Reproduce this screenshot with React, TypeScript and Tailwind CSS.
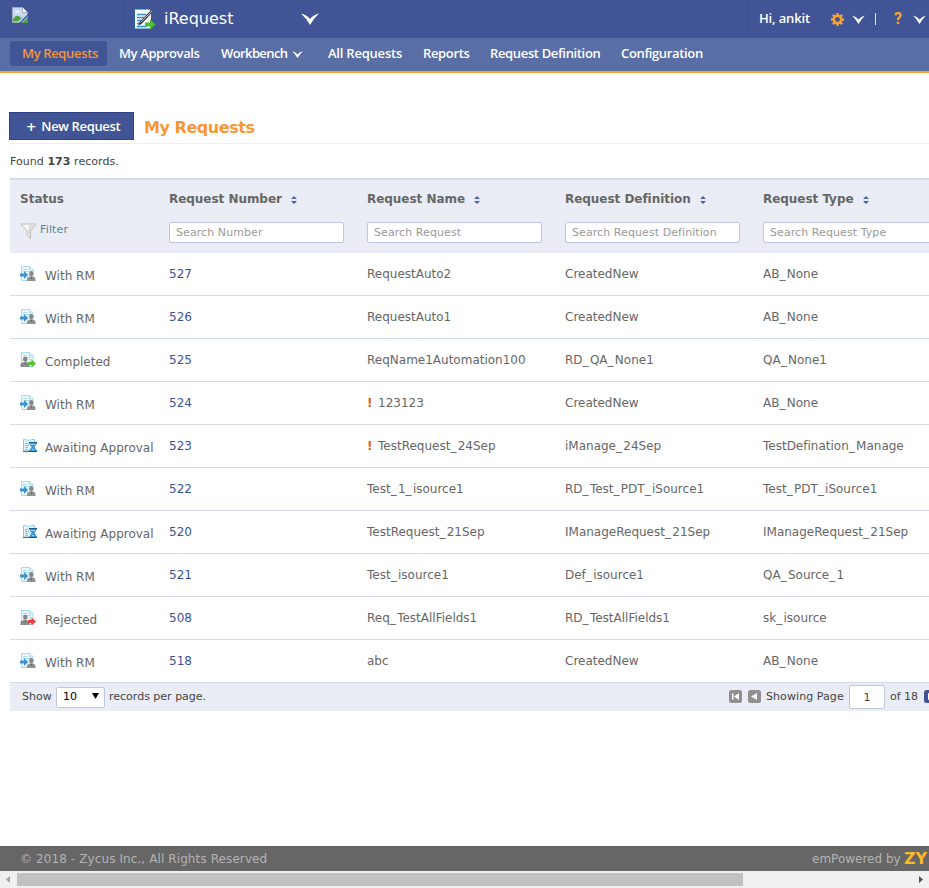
import React from 'react';

type Kind = 'rm' | 'done' | 'wait' | 'rejected';
type Row = [Kind, string, string, string, string, boolean?];

const labels: Record<Kind, string> = {
  rm: 'With RM',
  done: 'Completed',
  wait: 'Awaiting Approval',
  rejected: 'Rejected',
};

const rows: Row[] = [
  ['rm', '527', 'RequestAuto2', 'CreatedNew', 'AB_None'],
  ['rm', '526', 'RequestAuto1', 'CreatedNew', 'AB_None'],
  ['done', '525', 'ReqName1Automation100', 'RD_QA_None1', 'QA_None1'],
  ['rm', '524', '123123', 'CreatedNew', 'AB_None', true],
  ['wait', '523', 'TestRequest_24Sep', 'iManage_24Sep', 'TestDefination_Manage', true],
  ['rm', '522', 'Test_1_isource1', 'RD_Test_PDT_iSource1', 'Test_PDT_iSource1'],
  ['wait', '520', 'TestRequest_21Sep', 'IManageRequest_21Sep', 'IManageRequest_21Sep'],
  ['rm', '521', 'Test_isource1', 'Def_isource1', 'QA_Source_1'],
  ['rejected', '508', 'Req_TestAllFields1', 'RD_TestAllFields1', 'sk_isource'],
  ['rm', '518', 'abc', 'CreatedNew', 'AB_None'],
];

const columns = [
  { title: 'Request Number', hint: 'Search Number' },
  { title: 'Request Name', hint: 'Search Request' },
  { title: 'Request Definition', hint: 'Search Request Definition' },
  { title: 'Request Type', hint: 'Search Request Type' },
];

function Chevron({ className }: { className: string }) {
  return (
    <svg viewBox="0 0 18 12" preserveAspectRatio="none" className={className}>
      <path d="M0 .500Q5.500 1.500 9 6 12.500 1.500 18 .500 13 5 9 12 5 5 0 .500Z" fill="#fff" />
    </svg>
  );
}

/** Breaks a name at its underscores, which are set slightly wider than the font has them. */
function Name({ text }: { text: string }) {
  return (
    <>
      {text.split(/(_)/).map((part, i) =>
        part === '_' ? <span key={i} className="tracking-[1.3px]">_</span> : part,
      )}
    </>
  );
}

function StatusIcon({ kind }: { kind: Kind }) {
  if (kind === 'wait') {
    return (
      <svg width="16" height="16" viewBox="0 0 16 16" className="ml-0.5 block">
        <path d="M1.500 1.500h2l1 1 1-1 1 1 1-1 1 1 1-1h3V13H1.500z" fill="#e3f4fb" stroke="#8ccbe6" />
        <path d="M3 5.500h3M3 7.500h4M3 9.500h3M3 11.500h3" stroke="#8dbdd3" />
        <path d="M7 4h8v2h-1c0 1.500-1 2.500-2 3 1 .500 2 1.500 2 3h1v2H7v-2h1c0-1.500 1-2.500 2-3-1-.500-2-1.500-2-3H7z" fill="#3d98d4" />
        <path d="M7 4.500h8M7 13.500h8" stroke="#1b5c91" />
        <path d="M9 6.500h4M10 11.500h2" stroke="#9bd5f4" />
        <path d="M1 13.500h6" stroke="#287aa5" />
      </svg>
    );
  }
  const rm = kind === 'rm';
  return (
    <svg width="16" height="16" viewBox="0 0 16 16" className="block">
      <path d="M1.500.500h8.500l3 3V14.500H1.500z" fill="#eaf8fd" stroke="#a5dced" />
      <path d="M9.500.500v3.500H13M3 3.500h4M3 5.500h8M9 7.500h3M9 9.500h3" stroke="#a9dced" fill="none" />
      {rm ? (
        <>
          <ellipse cx="11.300" cy="7.500" rx="2.200" ry="2.600" fill="#858585" />
          <path d="M7 15v-2q0-1.800 2.500-2.500h3.500q2.500.700 2.500 2.500v2z" fill="#909090" />
          <path d="M10.800 10.500h1l-.3 2.500h-.4z" fill="#555" />
          <path d="M0 7.500h4V5l4.200 4L4 13v-2.500H0z" fill="#3f93cf" />
        </>
      ) : (
        <>
          <ellipse cx="5.300" cy="7.200" rx="2.200" ry="2.600" fill="#858585" />
          <path d="M.500 15v-2.500Q.500 11 3 10.200h4q2.500.800 2.500 2.300V15z" fill="#8a8a8a" />
          <path d="M4.800 10.200h1l-.3 2.500h-.4z" fill="#555" />
          <path d="M8 10h3.500V7.500L16 11.500l-4.500 4V13H8z" fill={kind === 'done' ? '#55c42e' : '#ee3f3f'} />
        </>
      )}
    </svg>
  );
}

function Sorter() {
  return (
    <svg width="6" height="8" viewBox="0 0 6 8" className="ml-[9px] mt-px shrink-0">
      <path d="M0 3 3 0l3 3zM0 5h6L3 8z" fill="#4c62a3" />
    </svg>
  );
}

function Header() {
  return (
    <header className="font-['Open_Sans',sans-serif] text-white">
      <div className="flex h-[38px] items-center bg-[#405496]">
        <svg width="16" height="16" viewBox="0 0 16 16" className="mb-2 ml-3 shrink-0">
          <path d="M.500.500h10l5 5v10H.500z" fill="#c6d8f6" stroke="#a5a9b2" />
          <path d="M1 14.500V12q4-6 8-1l2-1-5 4.500z" fill="#4ba546" />
          <path d="M3 5.500q0-2 2-1.500 2-1 2.500 1.500z" fill="#fff" />
          <path d="M10.500.500v5h5" fill="#fff" stroke="#aaa" />
          <path d="M7 16 16 7v2l-7 7z" fill="#405496" />
          <path d="m10 16 6-6v6z" fill="#4ba546" />
        </svg>
        <div className="ml-24 h-[34px] w-px bg-[#394b88]" />
        <svg width="22" height="22" viewBox="0 0 22 22" className="ml-[9px] shrink-0">
          <path d="M.500 1h15l2 2v18H.500z" fill="#f5fbff" stroke="#285f9c" />
          <path d="M3 6.500h9M3 9.500h7M3 12.500h6M3 15.500h5M3 18.500h10" stroke="#3e8dd0" strokeWidth="1.500" />
          <path d="m4 18 1.500-4L17 2l2.500 1L8.500 15z" fill="#444" />
          <path d="m7 14 11-11" stroke="#bbb" />
          <path d="M11 14.500h5v-3l5.500 5-5.500 5v-3h-5z" fill="#4ebd31" />
        </svg>
        <span className="ml-2 w-[137px] font-['DejaVu_Sans',sans-serif] text-base leading-5">iRequest</span>
        <Chevron className="h-3 w-[18px]" />
        <div className="ml-[429px] h-[34px] w-px bg-[#394b88]" />
        <span className="ml-2.5 w-[72px] whitespace-nowrap text-[13px] font-semibold tracking-[-0.15px]">Hi, ankit</span>
        <svg width="13" height="13" viewBox="-7 -7 14 14" className="shrink-0">
          <circle r="3.900" fill="none" stroke="#fca22e" strokeWidth="2.500" />
          <path d="M0-7v3M0 4v3M-7 0h3M4 0h3M-5-5l2 2M3 3l2 2M5-5 3-3M-3 3l-2 2" stroke="#fca22e" strokeWidth="2.600" />
        </svg>
        <Chevron className="ml-2 h-[9px] w-[13px] shrink-0" />
        <div className="ml-2.5 h-3 w-px shrink-0 bg-[#e4e7f1]" />
        <span className="ml-[18px] w-[19px] shrink-0 font-['Roboto',sans-serif] text-base font-bold text-[#fca22e]">?</span>
        <Chevron className="h-[9px] w-[13px] shrink-0" />
      </div>
      <nav className="flex h-[35px] items-start whitespace-nowrap border-b-2 border-[#fda62f] bg-[#5a6ea6] pt-[3px] text-[13px] font-semibold leading-[25px] tracking-[-0.35px]">
        <span className="ml-2.5 w-[97px] rounded-[3px] bg-[#405496] pl-3 text-[#f79433]">My Requests</span>
        <span className="w-[102px] pl-3 tracking-[-0.38px]">My Approvals</span>
        <span className="flex w-[107px] items-center pl-3 tracking-[-0.6px]">Workbench<Chevron className="ml-[5px] mt-0.5 h-[7px] w-[11px]" /></span>
        <span className="w-[95px] pl-3 tracking-[-0.22px]">All Requests</span>
        <span className="w-[67px] pl-3">Reports</span>
        <span className="w-[131px] pl-3">Request Definition</span>
        <span className="pl-3">Configuration</span>
      </nav>
    </header>
  );
}

function Pager() {
  return (
    <div className="flex h-7 w-[980px] items-center bg-[#eaedf5] pl-3 text-[11px] text-[#444]">
      <span className="w-[34px] pt-px">Show</span>
      <span className="flex h-[21px] w-[49px] items-center justify-between rounded-[2px] border border-[#c0c6df] bg-white pl-1.5 pr-[5px] pt-px text-black">
        10
        <svg width="7" height="6" viewBox="0 0 7 6" className="mb-1"><path d="M0 0h7L3.500 6z" fill="#000" /></svg>
      </span>
      <span className="ml-1 w-[620px] pt-px">records per page.</span>
      <svg width="13" height="13" viewBox="0 0 13 13" className="mb-0.5 shrink-0">
        <rect width="13" height="13" rx="2.500" fill="#909090" />
        <path d="M3 3.500h1.500v6H3zM10 3v7L5 6.500z" fill="#fff" />
      </svg>
      <svg width="13" height="13" viewBox="0 0 13 13" className="mb-0.5 ml-1.5 shrink-0">
        <rect width="13" height="13" rx="2.500" fill="#909090" />
        <path d="M9 3v7L3 6.500z" fill="#fff" />
      </svg>
      <span className="ml-[5px] w-[83px] whitespace-nowrap tracking-[0.08px]">Showing Page</span>
      <span className="flex h-6 w-9 items-center justify-center rounded-[2px] border border-[#c0c6df] bg-white pt-0.5">1</span>
      <span className="ml-[5px] w-[34px] whitespace-nowrap">of 18</span>
      <svg width="13" height="13" viewBox="0 0 13 13" className="mb-0.5 shrink-0">
        <rect width="13" height="13" rx="2.500" fill="#405496" />
        <path d="M4 3v7l6-3.500z" fill="#fff" />
      </svg>
    </div>
  );
}

export default function App() {
  return (
    <div className="flex h-[888px] w-[929px] flex-col overflow-hidden bg-white font-['DejaVu_Sans',sans-serif] [font-variant-ligatures:none]">
      <Header />
      <main className="h-[773px] pl-2.5 pt-10">
        <div className="flex h-[31px] items-start border-b border-[#eee]">
          <button className="-ml-px -mt-px h-7 w-[125px] shrink-0 whitespace-nowrap border border-dotted border-[#e4e7f0] bg-[#405496] pl-[3px] pt-0.5 font-['Open_Sans',sans-serif] text-[13px] font-semibold tracking-[-0.35px] text-white outline-dotted outline-1 -outline-offset-1 outline-[#333]">
            <span className="mr-[5px] font-['DejaVu_Sans',sans-serif]">+</span>New Request
          </button>
          <h1 className="ml-2.5 mt-[3px] text-base font-bold leading-6 tracking-[-0.45px] text-[#f89833]">My Requests</h1>
        </div>
        <p className="h-[34px] pt-[9px] text-[11px] leading-[18px] tracking-[0.05px] text-[#444]">Found <b>173</b> records.</p>
        <section className="w-[980px]">
          <div className="flex h-[75px] border-t-2 border-[#d5daea] bg-[#eaedf5] text-xs text-[#666]">
            <div className="w-[149px] shrink-0 pl-2.5 pt-[9px]">
              <div className="h-5 font-bold leading-5">Status</div>
              <div className="mt-[11px] flex h-5 items-center text-[11px] tracking-[0.15px] text-[#5d8295]">
                <svg width="18" height="17" viewBox="0 0 18 17" className="mr-0.5 mt-0.5">
                  <path d="M1 1h15l-5.500 7v7.500L7 12.500V8z" fill="#f7f7f5" stroke="#bbb" />
                  <path d="m10 8 4-5V2H9l-1 6v4l2 2z" fill="#ddd" />
                </svg>
                Filter
              </div>
            </div>
            {columns.map((c) => (
              <div key={c.title} className="w-[198px] shrink-0 pl-2.5 pt-[9px]">
                <div className="flex h-5 items-center whitespace-nowrap font-bold tracking-[-0.04px]">{c.title}<Sorter /></div>
                <div className="mt-[13px] flex h-[21px] w-[175px] items-center whitespace-nowrap rounded-[2px] border border-[#c0c6df] bg-white pl-1.5 pt-px text-[11px] tracking-[0.08px] text-[#999]">{c.hint}</div>
              </div>
            ))}
          </div>
          {rows.map(([kind, id, name, definition, type, urgent]) => (
            <div key={id} className="flex h-[43px] items-center border-b border-[#d5daea] text-xs text-[#666]">
              <div className="flex w-[149px] shrink-0 items-center whitespace-nowrap pl-2.5">
                <div className="w-[25px] shrink-0"><StatusIcon kind={kind} /></div>
                <span className="mt-[3px]">{labels[kind]}</span>
              </div>
              <span className="w-[198px] pl-2.5 text-[#3c5298]">{id}</span>
              <span className="w-[198px] whitespace-nowrap pl-2.5">
                {urgent && <b className="mr-1.5 inline-block w-[5px] text-[#e35b0b]">!</b>}
                <Name text={name} />
              </span>
              <span className="w-[198px] whitespace-nowrap pl-2.5"><Name text={definition} /></span>
              <span className="whitespace-nowrap pl-2.5"><Name text={type} /></span>
            </div>
          ))}
          <Pager />
        </section>
      </main>
      <footer className="flex h-[25px] items-center justify-between bg-[#666] pl-5 text-xs text-[#b4b4b4]">
        <span className="tracking-[0.1px]">© 2018 - Zycus Inc., All Rights Reserved</span>
        <span className="flex w-[117px] items-center whitespace-nowrap">
          <span className="w-[92px] shrink-0">emPowered by</span>
          <span className="mt-px text-base font-bold leading-5 text-[#fdb827]">ZY</span>
        </span>
      </footer>
      <div className="flex h-[17px] items-center bg-[#f0f0f0]">
        <svg width="17" height="17" viewBox="0 0 17 17"><path d="M10 5v7L6 8.500z" fill="#a3a3a3" /></svg>
        <div className="h-[13px] w-[726px] bg-[#c1c1c1]" />
        <svg width="17" height="17" viewBox="0 0 17 17" className="ml-auto"><path d="M7 5v7l4-3.500z" fill="#505050" /></svg>
      </div>
    </div>
  );
}
